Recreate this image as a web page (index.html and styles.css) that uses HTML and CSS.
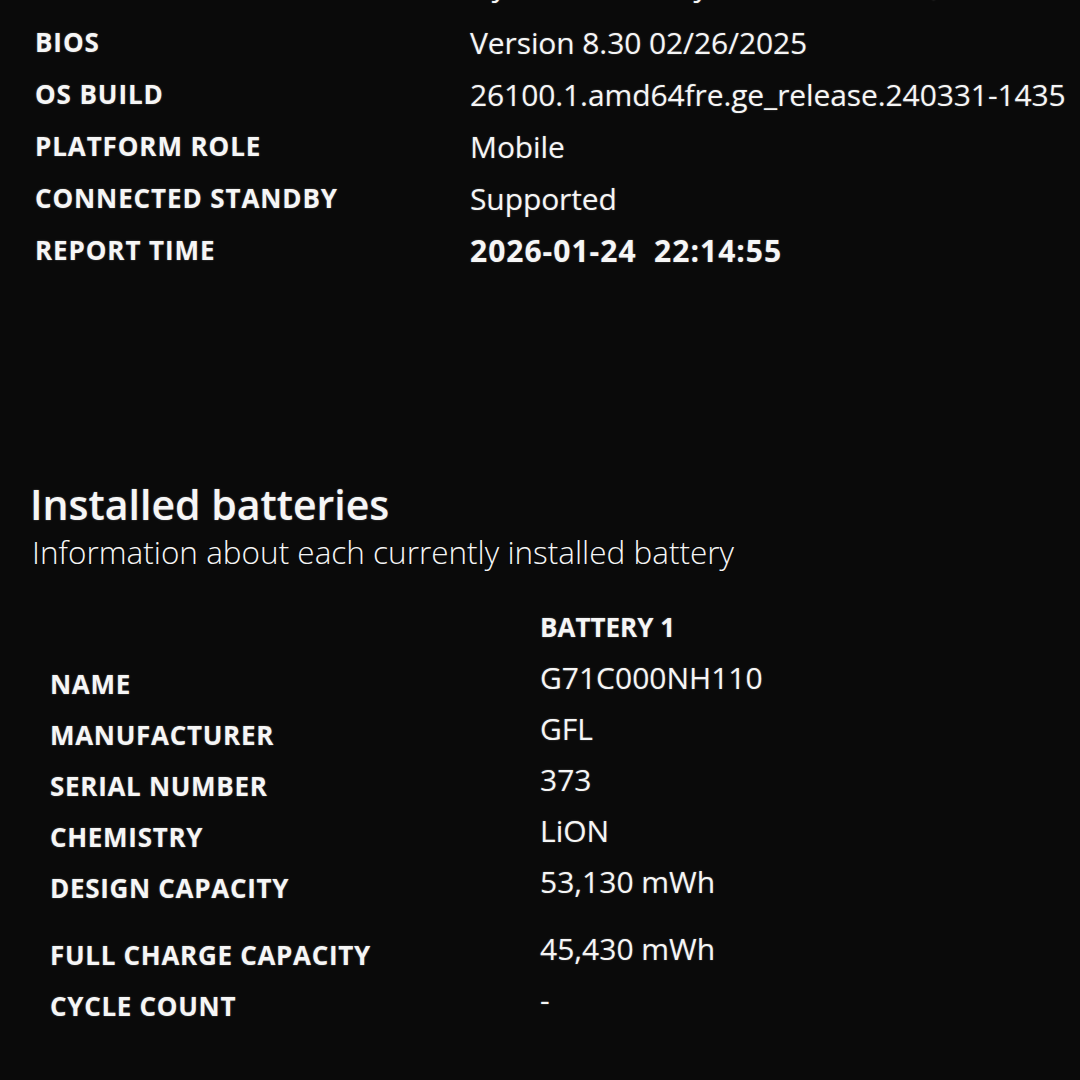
FILE: index.html
```html
<!DOCTYPE html>
<html lang="en">
<head>
    <title>Battery report</title>
    <meta charset="UTF-8">
    <link rel="stylesheet" href="styles.css">
</head>
<body>
    <div class="page">
        <div class="info-table">
            <div class="row first">
                <div class="label">SYSTEM PRODUCT NAME</div>
                <div class="value">Dynabook Inc. dynabook G83/HU, G83/HU</div>
            </div>
            <div class="row">
                <div class="label">BIOS</div>
                <div class="value">Version 8.30 02/26/2025</div>
            </div>
            <div class="row">
                <div class="label">OS BUILD</div>
                <div class="value">26100.1.amd64fre.ge_release.240331-1435</div>
            </div>
            <div class="row">
                <div class="label">PLATFORM ROLE</div>
                <div class="value">Mobile</div>
            </div>
            <div class="row">
                <div class="label">CONNECTED STANDBY</div>
                <div class="value">Supported</div>
            </div>
            <div class="row">
                <div class="label">REPORT TIME</div>
                <div class="value time">2026-01-24&nbsp; 22:14:55</div>
            </div>
        </div>

        <div class="section">
            <h2>Installed batteries</h2>
            <div class="sub">Information about each currently installed battery</div>
        </div>

        <div class="battery-table">
            <div class="row">
                <div class="label"></div>
                <div class="head">BATTERY 1</div>
            </div>
            <div class="row">
                <div class="label">NAME</div>
                <div class="value">G71C000NH110</div>
            </div>
            <div class="row">
                <div class="label">MANUFACTURER</div>
                <div class="value">GFL</div>
            </div>
            <div class="row">
                <div class="label">SERIAL NUMBER</div>
                <div class="value">373</div>
            </div>
            <div class="row">
                <div class="label">CHEMISTRY</div>
                <div class="value">LiON</div>
            </div>
            <div class="row">
                <div class="label">DESIGN CAPACITY</div>
                <div class="value">53,130 mWh</div>
            </div>
            <div class="row spaced">
                <div class="label">FULL CHARGE CAPACITY</div>
                <div class="value">45,430 mWh</div>
            </div>
            <div class="row">
                <div class="label">CYCLE COUNT</div>
                <div class="value">-</div>
            </div>
        </div>
    </div>
</body>
</html>
```

FILE: styles.css
```css
:root {
    --bg: #0a0a0a;
    --fg: #f6f6f6;
}

body{
    margin: 0;
    padding: 0;
    background-color: var(--bg);
    color: var(--fg);
    font-family: "Open Sans", "Noto Sans", sans-serif;
    width: 1080px;
    height: 1080px;
    overflow: hidden;
}
.page{
    padding-left: 35px;
}
.label{
    font-weight: 700;
    font-size: 26px;
    letter-spacing: 0.9px;
    white-space: nowrap;
    text-shadow: 0 0 2px rgba(255, 255, 255, 0.35);
}
.value{
    font-size: 30px;
    white-space: nowrap;
    text-shadow: 0 0 2px rgba(255, 255, 255, 0.3);
}
.row{
    display: grid;
    align-items: center;
}
.info-table{
    margin-top: -48px;
}
.info-table .row{
    grid-template-columns: 435px 1fr;
    height: 52px;
}
.info-table .first{
    height: 64px;
}
.info-table .value{
    letter-spacing: -0.1px;
}
.time{
    font-weight: 700;
    letter-spacing: 1px !important;
}
.section{
    margin-top: 200px;
    margin-left: -5px;
}
h2{
    margin: 0;
    font-size: 41px;
    font-weight: 600;
    line-height: 56px;
    text-shadow: 0 0 2px rgba(255, 255, 255, 0.35);
}
.sub{
    font-size: 31.5px;
    font-weight: 300;
    line-height: 40px;
    margin-left: 2px;
}
.battery-table{
    margin-top: 29px;
    padding-left: 15px;
}
.battery-table .row{
    grid-template-columns: 490px 1fr;
    height: 51px;
}
.battery-table .label{
    padding-top: 13px;
    letter-spacing: 0.7px;
}
.head{
    font-weight: 700;
    font-size: 26px;
    text-shadow: 0 0 2px rgba(255, 255, 255, 0.35);
}
.battery-table .spaced{
    margin-top: 16px;
}
```
